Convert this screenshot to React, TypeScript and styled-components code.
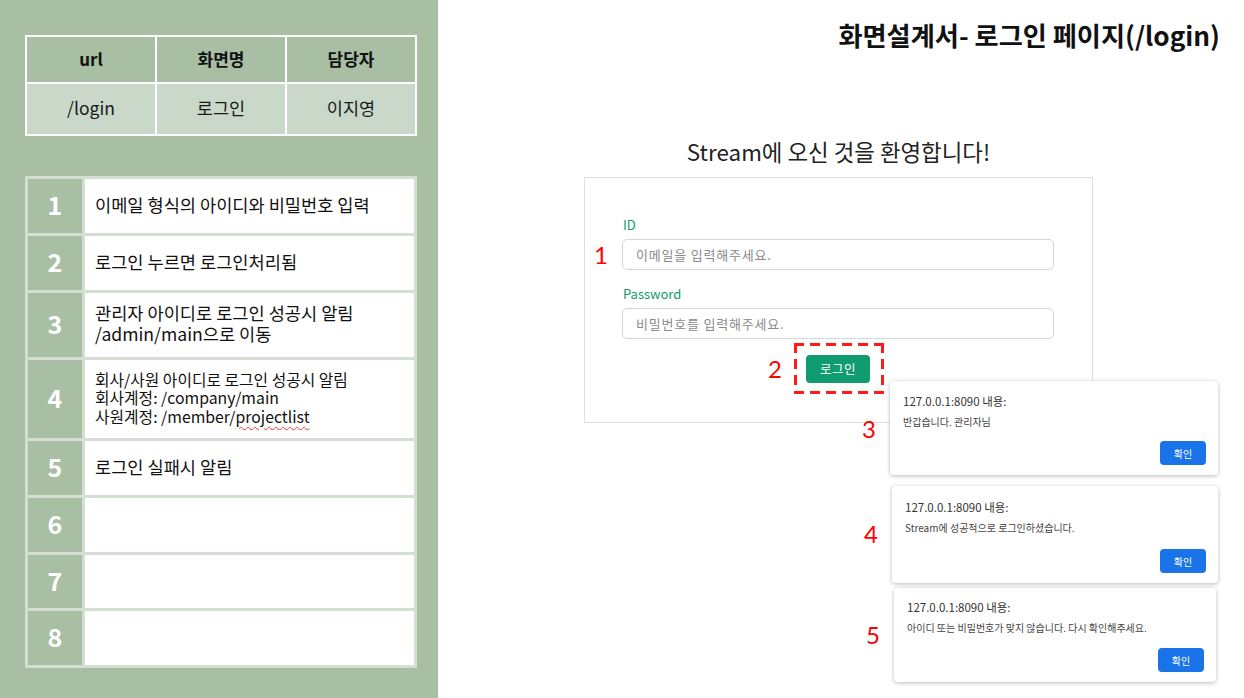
import React from "react";
import styled, { createGlobalStyle } from "styled-components";

const GlobalStyle = createGlobalStyle`
  html, body { margin: 0; padding: 0; background: #ffffff; }
  body { font-family: "Noto Sans CJK KR", "Noto Sans", sans-serif; color: #111; }
  * { box-sizing: border-box; }
`;

const Page = styled.div`
  display: flex;
  width: 1244px;
  height: 698px;
  overflow: hidden;
`;

const LeftPanel = styled.aside`
  width: 438px;
  flex-shrink: 0;
  background: #a8bfa4;
  padding: 35px 21px 0 25px;
  display: flex;
  flex-direction: column;
  gap: 40px;
`;

const InfoTable = styled.div`
  display: grid;
  grid-template-columns: repeat(3, 1fr);
  grid-template-rows: 45px 50px;
  gap: 2px;
  border: 2px solid #ffffff;
  background: #ffffff;
`;

const HeadCell = styled.div`
  background: #a8bfa4;
  display: flex;
  align-items: center;
  justify-content: center;
  padding-bottom: 3px;
  font-size: 17px;
  font-weight: 700;
  color: #111;
`;

const BodyCell = styled.div`
  background: #c9d8c9;
  display: flex;
  align-items: center;
  justify-content: center;
  padding-bottom: 3px;
  font-size: 17.5px;
  color: #1a1a1a;
`;

const ListTable = styled.div`
  display: grid;
  grid-template-columns: 54px 1fr;
  gap: 3px;
  padding: 3px;
  background: #d3dfd1;
`;

const NumCell = styled.div<{ $h: number }>`
  height: ${(p) => p.$h}px;
  background: #a8bfa4;
  display: flex;
  align-items: center;
  justify-content: center;
  padding-bottom: 4px;
  color: #ffffff;
  font-size: 25px;
  font-weight: 700;
`;

const TextCell = styled.div<{ $h: number; $small?: boolean }>`
  height: ${(p) => p.$h}px;
  background: #ffffff;
  display: flex;
  flex-direction: column;
  justify-content: center;
  padding: 0 10px ${(p) => (p.$small ? "1px" : "4px")};
  font-size: ${(p) => (p.$small ? "15.8px" : "17.6px")};
  line-height: ${(p) => (p.$small ? "18.5px" : "21px")};
  color: #111;
`;

const Spell = styled.span`
  text-decoration: underline wavy #e23b3b;
  text-decoration-thickness: 1px;
  text-underline-offset: 3px;
`;

const RightArea = styled.main`
  flex: 1;
  position: relative;
  display: flex;
  flex-direction: column;
`;

const Title = styled.h1`
  align-self: flex-end;
  margin: 19px 24px 0 0;
  font-size: 26.2px;
  line-height: 33px;
  font-weight: 700;
  color: #111;
`;

const LoginArea = styled.section`
  width: 509px;
  margin: 86px 0 0 146px;
  display: flex;
  flex-direction: column;
  align-items: center;
`;

const Welcome = styled.h2`
  margin: 0 0 12px;
  font-size: 22.4px;
  line-height: 27px;
  font-weight: 400;
  color: #222;
`;

const Card = styled.form`
  width: 509px;
  height: 246px;
  border: 1px solid #dedede;
  padding: 39px 38px 0 37px;
  display: flex;
  flex-direction: column;
  align-items: stretch;
`;

const Label = styled.label<{ $gapTop?: number }>`
  margin-top: ${(p) => p.$gapTop ?? 0}px;
  margin-bottom: 6px;
  padding-left: 1px;
  font-size: 13px;
  line-height: 16px;
  color: #139a6f;
`;

const InputWrap = styled.div`
  position: relative;
`;

const Input = styled.div`
  height: 31px;
  border: 1px solid #d3d7db;
  border-radius: 5px;
  padding-left: 13px;
  display: flex;
  align-items: center;
  font-size: 13px;
  letter-spacing: 0.8px;
  color: #8a8a8a;
`;

const Marker = styled.span`
  position: absolute;
  font-family: Lato, "Liberation Sans", sans-serif;
  font-weight: 400;
  font-size: 24px;
  line-height: 24px;
  color: #ff0000;
`;

const InputMarker = styled(Marker)`
  right: calc(100% + 14px);
  top: 50%;
  transform: translateY(-50%);
`;

const Highlight = styled.div`
  position: relative;
  align-self: center;
  margin: 4px 0 0 2px;
  width: 90px;
  height: 51px;
  background:
    linear-gradient(90deg, #ff1a1a 62%, transparent 0) left top / 16px 3px repeat-x,
    linear-gradient(90deg, #ff1a1a 62%, transparent 0) left bottom / 16px 3px repeat-x,
    linear-gradient(180deg, #ff1a1a 62%, transparent 0) left top / 3px 16px repeat-y,
    linear-gradient(180deg, #ff1a1a 62%, transparent 0) right top / 3px 16px repeat-y;
  display: flex;
  align-items: center;
  justify-content: center;
  padding-right: 2px;
`;

const HighlightMarker = styled(Marker)`
  right: calc(100% + 12px);
  top: 50%;
  transform: translateY(-50%);
`;

const LoginButton = styled.button`
  width: 64px;
  height: 28px;
  border: none;
  border-radius: 4px;
  background: #0f9d70;
  color: #ffffff;
  font-family: inherit;
  font-size: 12.5px;
  letter-spacing: 0.5px;
`;

const DialogStack = styled.div`
  position: absolute;
  left: 452px;
  top: 381px;
  display: flex;
  flex-direction: column;
`;

const Dialog = styled.div<{ $w: number; $h: number; $indent: number; $gap: number; $titleTop: number }>`
  position: relative;
  width: ${(p) => p.$w}px;
  height: ${(p) => p.$h}px;
  margin: ${(p) => p.$gap}px 0 0 ${(p) => p.$indent}px;
  background: #ffffff;
  border-radius: 4px;
  box-shadow: 0 1px 4px rgba(0, 0, 0, 0.28);
  padding: ${(p) => p.$titleTop}px 12px 10px 13px;
  display: flex;
  flex-direction: column;
`;

const DialogTitle = styled.div`
  font-size: 11.5px;
  line-height: 14px;
  color: #333;
`;

const DialogBody = styled.div`
  margin-top: 7px;
  font-size: 10px;
  line-height: 14px;
  color: #444;
`;

const OkButton = styled.button`
  margin-top: auto;
  align-self: flex-end;
  width: 46px;
  height: 24px;
  border: none;
  border-radius: 4px;
  background: #1a73e8;
  color: #ffffff;
  font-family: inherit;
  font-size: 10px;
`;

const DialogMarker = styled(Marker)<{ $top: number }>`
  right: calc(100% + 14px);
  top: ${(p) => p.$top}px;
`;

const rows = [
  { n: 1, h: 54, lines: ["이메일 형식의 아이디와 비밀번호 입력"] },
  { n: 2, h: 54, lines: ["로그인 누르면 로그인처리됨"] },
  { n: 3, h: 64, lines: ["관리자 아이디로 로그인 성공시 알림", "/admin/main으로 이동"] },
  { n: 4, h: 78, small: true, lines: [] as string[] },
  { n: 5, h: 54, lines: ["로그인 실패시 알림"] },
  { n: 6, h: 54, lines: [] },
  { n: 7, h: 53, lines: [] },
  { n: 8, h: 54, lines: [] },
];

const dialogs = [
  { n: 3, w: 328, h: 94, indent: 0, gap: 0, titleTop: 13, mTop: 36, body: "반갑습니다. 관리자님" },
  { n: 4, w: 326, h: 97, indent: 2, gap: 11, titleTop: 14, mTop: 36, body: "Stream에 성공적으로 로그인하셨습니다." },
  { n: 5, w: 322, h: 94, indent: 4, gap: 5, titleTop: 12, mTop: 35, body: "아이디 또는 비밀번호가 맞지 않습니다. 다시 확인해주세요." },
];

export default function App() {
  return (
    <>
      <GlobalStyle />
      <Page>
        <LeftPanel>
          <InfoTable>
            <HeadCell>url</HeadCell>
            <HeadCell>화면명</HeadCell>
            <HeadCell>담당자</HeadCell>
            <BodyCell>/login</BodyCell>
            <BodyCell>로그인</BodyCell>
            <BodyCell>이지영</BodyCell>
          </InfoTable>
          <ListTable>
            {rows.map((r) => (
              <React.Fragment key={r.n}>
                <NumCell $h={r.h}>{r.n}</NumCell>
                <TextCell $h={r.h} $small={r.small}>
                  {r.n === 4 ? (
                    <>
                      <div>회사/사원 아이디로 로그인 성공시 알림</div>
                      <div>회사계정: /company/main</div>
                      <div>
                        사원계정: /member/<Spell>projectlist</Spell>
                      </div>
                    </>
                  ) : (
                    r.lines.map((l) => <div key={l}>{l}</div>)
                  )}
                </TextCell>
              </React.Fragment>
            ))}
          </ListTable>
        </LeftPanel>

        <RightArea>
          <Title>화면설계서- 로그인 페이지(/login)</Title>
          <LoginArea>
            <Welcome>Stream에 오신 것을 환영합니다!</Welcome>
            <Card onSubmit={(e) => e.preventDefault()}>
              <Label>ID</Label>
              <InputWrap>
                <InputMarker>1</InputMarker>
                <Input>이메일을 입력해주세요.</Input>
              </InputWrap>
              <Label $gapTop={16}>Password</Label>
              <Input>비밀번호를 입력해주세요.</Input>
              <Highlight>
                <HighlightMarker>2</HighlightMarker>
                <LoginButton type="button">로그인</LoginButton>
              </Highlight>
            </Card>
          </LoginArea>

          <DialogStack>
            {dialogs.map((d) => (
              <Dialog key={d.n} $w={d.w} $h={d.h} $indent={d.indent} $gap={d.gap} $titleTop={d.titleTop}>
                <DialogMarker $top={d.mTop}>{d.n}</DialogMarker>
                <DialogTitle>127.0.0.1:8090 내용:</DialogTitle>
                <DialogBody>{d.body}</DialogBody>
                <OkButton type="button">확인</OkButton>
              </Dialog>
            ))}
          </DialogStack>
        </RightArea>
      </Page>
    </>
  );
}
